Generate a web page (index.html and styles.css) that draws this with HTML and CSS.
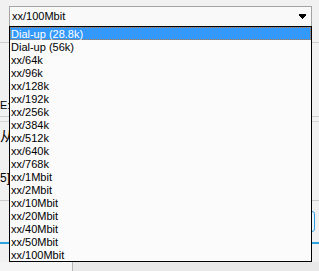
FILE: index.html
```html
<!DOCTYPE html>
<html lang="en">
<head>
    <meta charset="UTF-8">
    <title>Connection speed</title>
    <link rel="stylesheet" href="styles.css">
</head>
<body>

<div class="page">
    <div class="combo">
        <span class="combo-value">xx/100Mbit</span>
        <svg class="combo-arrow" width="7" height="5" viewBox="0 0 7 5" shape-rendering="crispEdges">
            <rect x="0" y="0" width="7" height="2" fill="#000"/>
            <rect x="1" y="2" width="5" height="1" fill="#000"/>
            <rect x="2" y="3" width="3" height="1" fill="#000"/>
            <rect x="3" y="4" width="1" height="1" fill="#000"/>
        </svg>

        <!-- open dropdown, lies over the form below -->
        <ul class="combo-list">
            <li class="selected">Dial-up (28.8k)</li>
            <li>Dial-up (56k)</li>
            <li>xx/64k</li>
            <li>xx/96k</li>
            <li>xx/128k</li>
            <li>xx/192k</li>
            <li>xx/256k</li>
            <li>xx/384k</li>
            <li>xx/512k</li>
            <li>xx/640k</li>
            <li>xx/768k</li>
            <li>xx/1Mbit</li>
            <li>xx/2Mbit</li>
            <li>xx/10Mbit</li>
            <li>xx/20Mbit</li>
            <li>xx/40Mbit</li>
            <li>xx/50Mbit</li>
            <li>xx/100Mbit</li>
        </ul>
    </div>

    <div class="form">
        <div class="row row-top"></div>
        <div class="row row-mode">
            <div class="label">E:</div>
        </div>
        <div class="row row-note">
            <div class="label cjk">从</div>
        </div>
        <div class="row row-link">
            <div class="label small">5]</div>
        </div>
        <div class="row row-actions">
            <button class="btn" type="button">OK</button>
        </div>
        <div class="row row-space"></div>
        <div class="footer">
            <div class="footer-left"></div>
            <div class="footer-right"></div>
        </div>
    </div>
</div>

</body>
</html>
```

FILE: styles.css
```css
body {
    margin: 0;
    background-color: #f1f1f1;
    font-family: "Liberation Sans", Arial, sans-serif;
    font-size: 11px;
    color: #000;
}

.page {
    padding-top: 6px;
    height: 265px;
    overflow: hidden;
}

/* combo box */
.combo {
    position: relative;
    z-index: 2;
    margin-left: 9px;
    width: 303px;
    height: 21px;
    box-sizing: border-box;
    border: 1px solid #a3a3a3;
    background-color: #f9f9f9;
    display: flex;
    align-items: center;
    justify-content: space-between;
    padding: 0 5px 0 2px;
}

.combo-value {
    line-height: 13px;
}

.combo-arrow {
    display: block;
}

.combo-list {
    position: absolute;
    top: 100%;
    left: -1px;
    width: 303px;
    box-sizing: border-box;
    margin: 0;
    padding: 0;
    list-style: none;
    border: 1px solid #000;
    background-color: #fbfbfb;
}

.combo-list li {
    height: 13px;
    box-sizing: border-box;
    border: 1px solid transparent;
    line-height: 12px;
    white-space: nowrap;
}

.combo-list li.selected {
    background-color: #3399ff;
    color: #fff;
    border: 1px dotted #c27b3c;
}

/* form behind the dropdown, mostly hidden by the list */
.form {
    display: flex;
    flex-direction: column;
}

.row {
    display: flex;
}

.label {
    width: 9px;
    white-space: nowrap;
    line-height: 13px;
    overflow: hidden;
}

.label.cjk {
    font-family: "Noto Sans CJK SC", sans-serif;
    font-size: 14px;
    line-height: 20px;
}

.label.small {
    font-size: 12px;
    line-height: 16px;
}

.row-top {
    height: 15px;
    border-bottom: 1px solid #cdcdcd;
}

.row-mode {
    height: 73px;
    align-items: flex-end;
    border-bottom: 1px solid #cdcdcd;
}

.row-mode .label {
    padding-bottom: 4px;
}

.row-note {
    margin-top: 4px;
    border-top: 1px solid #d6d6d6;
    height: 49px;
    padding-top: 3px;
    box-sizing: border-box;
}

.row-link {
    height: 30px;
    align-items: flex-start;
    border-bottom: 1px solid #c9c9c9;
}

.row-actions {
    height: 41px;
    justify-content: flex-end;
    align-items: center;
    border-bottom: 2px solid #2aa3e0;
}

.btn {
    width: 60px;
    height: 21px;
    margin-right: 4px;
    border: 1px solid #2d9bd9;
    border-radius: 3px;
    background-color: #eef7fd;
    font-family: inherit;
    font-size: 11px;
}

.row-space {
    height: 18px;
}

.footer {
    display: flex;
    height: 12px;
}

.footer-left {
    width: 72px;
    background-color: #f5f5f5;
    border-right: 1px solid #b5b5b5;
}

.footer-right {
    flex: 1;
    background-color: #e9e9e9;
}
```
